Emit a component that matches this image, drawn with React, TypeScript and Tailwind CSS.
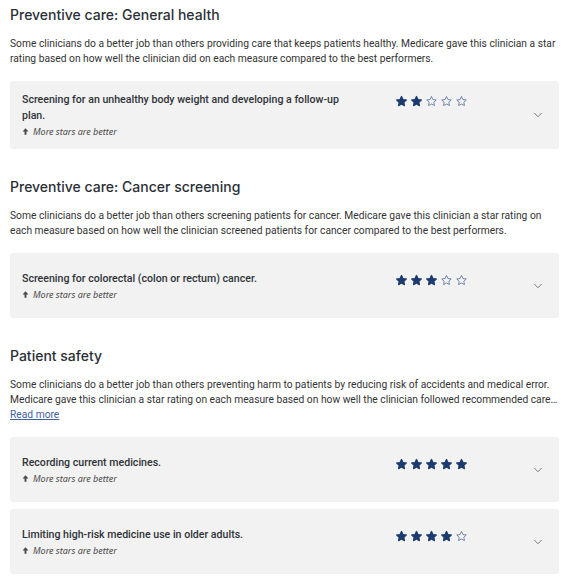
import { ChevronDown } from 'lucide-react'

const star = 'M12 2.8l2.7 5.6 6.1.8-4.5 4.2 1.1 6.1L12 16.6l-5.4 2.9 1.1-6.1-4.5-4.2 6.1-.8z'

function Stars({ count }: { count: number }) {
  return (
    <div className="flex items-center gap-[2px]">
      {[0, 1, 2, 3, 4].map((i) => (
        <svg key={i} viewBox="0 0 24 24" className="h-[13px] w-[13px]">
          <path
            d={star}
            fill={i < count ? '#1b3a6d' : 'none'}
            stroke={i < count ? '#1b3a6d' : '#3d5d91'}
            strokeWidth={i < count ? 2.4 : 1.3}
            strokeLinejoin="round"
          />
        </svg>
      ))}
    </div>
  )
}

function Measure({ title, stars }: { title: string; stars: number }) {
  return (
    <div className="flex min-h-[65px] items-center rounded-[3px] bg-[#f2f2f2] py-[11px] pl-3 pr-[14px]">
      <div className="flex flex-1 items-start">
        <div className="w-[363px]">
          <div className="max-w-[330px] text-[10.6px] font-medium leading-[16px] text-[#2f3338]">{title}</div>
          <div
            className="mt-[1px] flex items-center gap-[4px] text-[9px] italic leading-[13px] text-[#4a4a4a]"
            style={{ fontFamily: '"Noto Sans", sans-serif' }}
          >
            <svg viewBox="0 0 10 10" className="h-[7px] w-[7px]">
              <path d="M5 0.5L9.2 5H6.4v4.5H3.6V5H0.8z" fill="#4a4a4a" />
            </svg>
            More stars are better
          </div>
        </div>
        <div className="ml-[10px] mt-[3px]">
          <Stars count={stars} />
        </div>
      </div>
      <ChevronDown className="h-[14px] w-[14px] text-[#555]" strokeWidth={1.3} />
    </div>
  )
}

function Section({ heading, text, readMore, children }: { heading: string; text: string; readMore?: boolean; children: React.ReactNode }) {
  return (
    <section className="flex flex-col">
      <h2 className="text-[14px] font-medium leading-[20px] text-[#2b3036]" style={{ fontFamily: 'Inter, sans-serif' }}>
        {heading}
      </h2>
      <p className="mt-[11px] text-[10.25px] leading-[15px] text-[#333]">
        {text}
      </p>
      {readMore && (
        <a href="#" className="self-start text-[10.25px] leading-[15px] text-[#3f61a0] underline">
          Read more
        </a>
      )}
      <div className="mt-[15px] flex flex-col gap-[7px]">{children}</div>
    </section>
  )
}

export default function App() {
  return (
    <div
      className="flex w-[566px] flex-col gap-[28px] bg-white pl-[10px] pr-[7px] pt-[5px]"
      style={{ fontFamily: 'Roboto, sans-serif' }}
    >
      <Section
        heading="Preventive care: General health"
        text="Some clinicians do a better job than others providing care that keeps patients healthy. Medicare gave this clinician a star rating based on how well the clinician did on each measure compared to the best performers."
      >
        <Measure title="Screening for an unhealthy body weight and developing a follow-up plan." stars={2} />
      </Section>
      <Section
        heading="Preventive care: Cancer screening"
        text="Some clinicians do a better job than others screening patients for cancer. Medicare gave this clinician a star rating on each measure based on how well the clinician screened patients for cancer compared to the best performers."
      >
        <Measure title="Screening for colorectal (colon or rectum) cancer." stars={3} />
      </Section>
      <Section
        heading="Patient safety"
        text="Some clinicians do a better job than others preventing harm to patients by reducing risk of accidents and medical error. Medicare gave this clinician a star rating on each measure based on how well the clinician followed recommended care…"
        readMore
      >
        <Measure title="Recording current medicines." stars={5} />
        <Measure title="Limiting high-risk medicine use in older adults." stars={4} />
      </Section>
    </div>
  )
}
